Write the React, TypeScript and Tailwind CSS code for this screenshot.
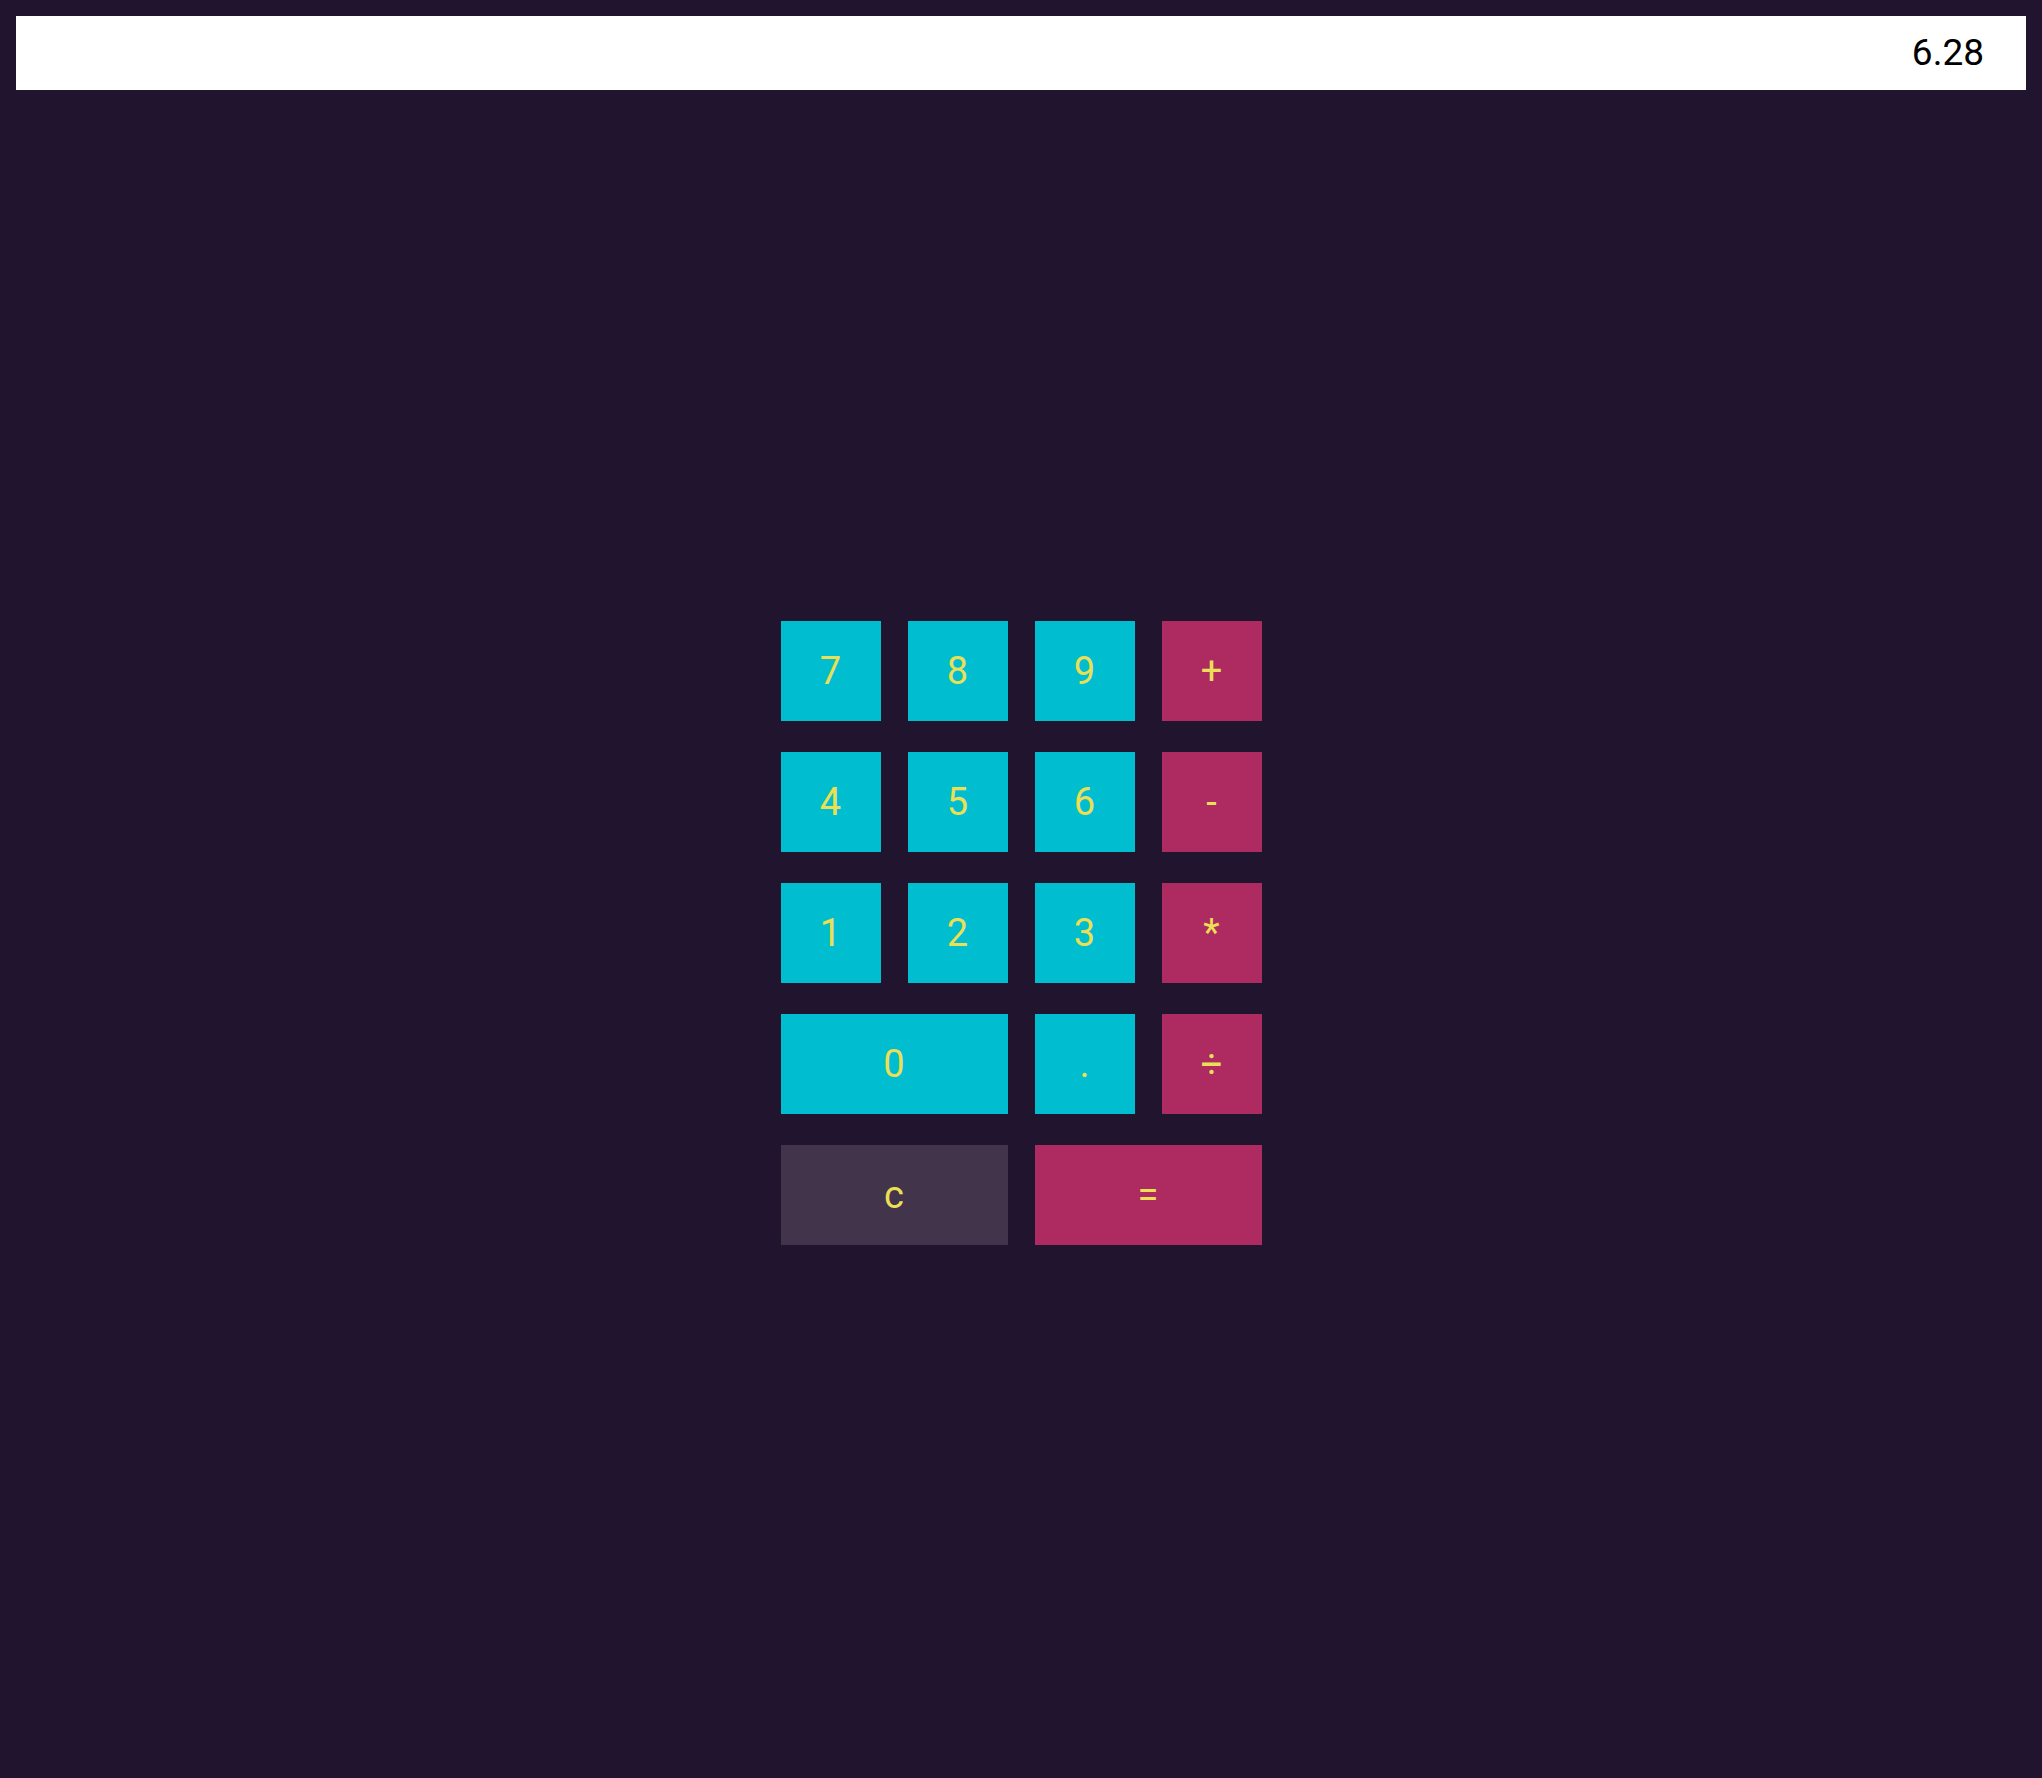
import React from "react";

type Key = { label: string; kind: "num" | "op" | "clear"; wide?: boolean };

const KEYS: Key[] = [
  { label: "7", kind: "num" },
  { label: "8", kind: "num" },
  { label: "9", kind: "num" },
  { label: "+", kind: "op" },
  { label: "4", kind: "num" },
  { label: "5", kind: "num" },
  { label: "6", kind: "num" },
  { label: "-", kind: "op" },
  { label: "1", kind: "num" },
  { label: "2", kind: "num" },
  { label: "3", kind: "num" },
  { label: "*", kind: "op" },
  { label: "0", kind: "num", wide: true },
  { label: ".", kind: "num" },
  { label: "÷", kind: "op" },
  { label: "c", kind: "clear", wide: true },
  { label: "=", kind: "op", wide: true },
];

const KIND_BG = {
  num: "bg-[#00bdd0]",
  op: "bg-[#ae2b62]",
  clear: "bg-[#42354b]",
};

export default function App() {
  return (
    <div
      className="min-h-screen flex flex-col bg-[#20142e]"
      style={{ fontFamily: "Roboto, 'Liberation Sans', sans-serif" }}
    >
      {/* Display */}
      <div className="m-4 mb-0 h-[74px] bg-white flex items-center justify-end pr-[42px] text-[37px] text-black">
        6.28
      </div>

      {/* Keypad */}
      <div className="flex-1 flex items-center justify-center pb-[2px]">
        <div className="grid grid-cols-[100px_100px_100px_100px] auto-rows-[100px] gap-x-[27px] gap-y-[31px]">
          {KEYS.map((k, i) => (
            <button
              key={i}
              className={`${KIND_BG[k.kind]} ${k.wide ? "col-span-2" : ""} flex items-center justify-center text-[38px] text-[#ebdf55]`}
            >
              {k.label}
            </button>
          ))}
        </div>
      </div>
    </div>
  );
}
